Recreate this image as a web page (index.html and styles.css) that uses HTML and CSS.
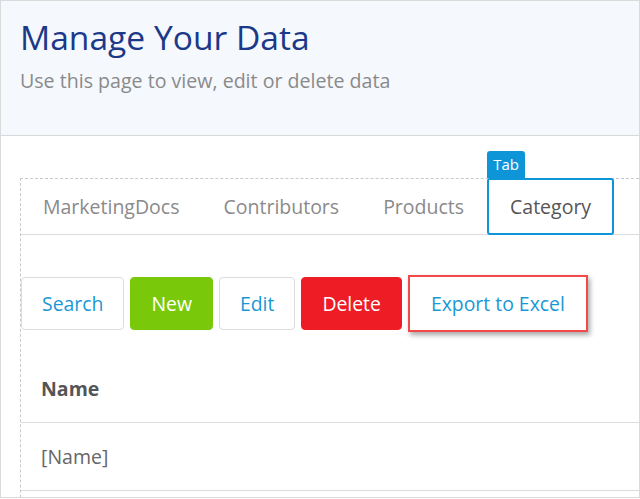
FILE: index.html
```html
<!DOCTYPE html>
<html lang="en">
<head>
<meta charset="utf-8">
<title>Manage Your Data</title>
<link rel="stylesheet" href="styles.css">
</head>
<body>
<div class="page">
  <header class="hero">
    <h1 class="hero-title">Manage Your Data</h1>
    <p class="hero-sub">Use this page to view, edit or delete data</p>
  </header>
  <section class="panel">
    <nav class="tabs">
      <span class="tab">MarketingDocs</span>
      <span class="tab">Contributors</span>
      <span class="tab">Products</span>
      <span class="tab tab-active"><span class="tab-badge">Tab</span>Category</span>
    </nav>
    <div class="toolbar">
      <button class="btn">Search</button>
      <button class="btn btn-green">New</button>
      <button class="btn">Edit</button>
      <button class="btn btn-red">Delete</button>
      <button class="btn btn-export">Export to Excel</button>
    </div>
    <div class="table">
      <div class="row row-head">Name</div>
      <div class="row">[Name]</div>
    </div>
  </section>
</div>
</body>
</html>
```
FILE: styles.css
```css
* { box-sizing: border-box; }
html, body { margin: 0; padding: 0; background: #fff; }
body { font-family: "Open Sans", "Noto Sans", sans-serif; }

.page {
  width: 640px;
  height: 498px;
  border: 1px solid #dadada;
  overflow: hidden;
}

.hero {
  height: 135px;
  background: #f5f8fd;
  border-bottom: 1px solid #d9d9d9;
  padding: 16px 0 0 19px;
}
.hero-title {
  margin: 0;
  font-weight: 400;
  font-size: 33.6px;
  line-height: 40px;
  color: #1b3889;
}
.hero-sub {
  margin: 11px 0 0;
  font-size: 19.6px;
  line-height: 26px;
  color: #8a8a8a;
}

.panel {
  margin: 42px 0 0 19px;
  border-top: 1px dashed #c9c9c9;
  border-left: 1px dashed #c9c9c9;
  height: 400px;
}

.tabs {
  display: flex;
  height: 56px;
  border-bottom: 1px solid #dcdcdc;
}
.tab {
  display: flex;
  align-items: center;
  padding: 0 22px;
  font-size: 19.5px;
  color: #8a8a8a;
}
.tab-active {
  position: relative;
  margin: -1px 0 -1px 1px;
  padding: 0 21px;
  border: 2px solid #0e95d8;
  border-radius: 3px;
  color: #555;
  background: #fff;
}
.tab-badge {
  position: absolute;
  left: -2px;
  top: -29px;
  width: 38px;
  height: 27px;
  background: #0e95d8;
  color: #fff;
  font-size: 15px;
  line-height: 27px;
  text-align: center;
  border-radius: 3px 3px 0 0;
}

.toolbar {
  display: flex;
  align-items: center;
  gap: 6px;
  margin-top: 40px;
  height: 57px;
}
.btn {
  height: 53px;
  padding: 0 20px;
  border: 1px solid #dcdcdc;
  border-radius: 4px;
  background: #fff;
  color: #1a98d5;
  font-family: "Open Sans", "Noto Sans", sans-serif;
  font-size: 19.4px;
}
.btn-green { background: #79c80a; border-color: #79c80a; color: #fff; }
.btn-red { background: #ee1c25; border-color: #ee1c25; color: #fff; }
.btn-export {
  height: 57px;
  margin-left: 0;
  padding: 0 21px;
  border: 2px solid #f24a4a;
  border-radius: 0;
  box-shadow: 2px 3px 5px rgba(0, 0, 0, 0.35);
}

.table { margin-top: 23px; }
.row {
  display: flex;
  align-items: center;
  height: 68px;
  padding-left: 20px;
  border-bottom: 1px solid #dcdcdc;
  font-size: 19.5px;
  color: #666;
}
.row-head { font-weight: 700; color: #555; }
```
